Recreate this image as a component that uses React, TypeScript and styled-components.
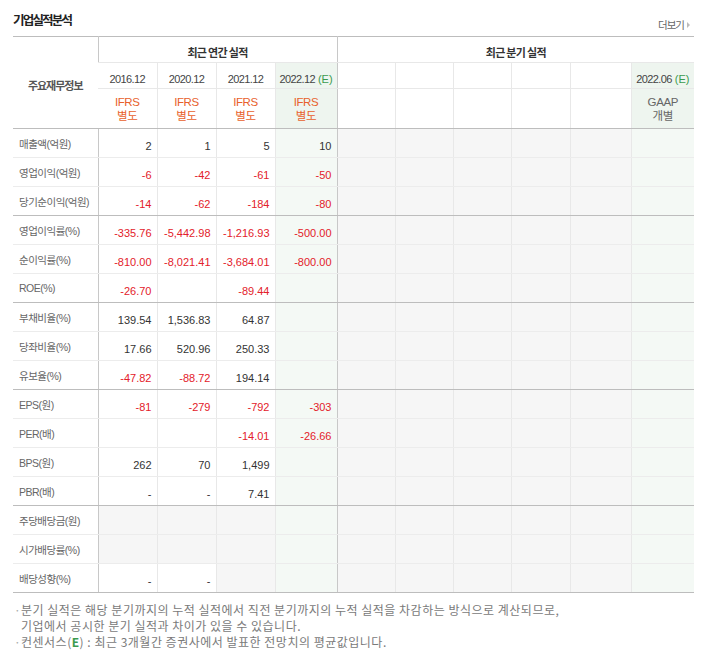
import React from 'react';
import styled, { createGlobalStyle } from 'styled-components';

const KR = `"Noto Sans CJK KR", sans-serif`;
const NUM = `"Liberation Sans", "Noto Sans CJK KR", sans-serif`;

const Global = createGlobalStyle`
  html, body { margin: 0; padding: 0; background: #fff; }
  body { font-family: ${KR}; color: #333; }
`;

const Wrap = styled.div`
  width: 681px;
  padding: 0 0 0 13px;
`;

const TitleBar = styled.div`
  height: 36px;
  display: flex;
  justify-content: space-between;
  align-items: flex-start;
`;

const Title = styled.h3`
  margin: 12px 0 0;
  font-size: 12.5px;
  line-height: 16px;
  font-weight: 700;
  letter-spacing: -1.8px;
  color: #222;
`;

const More = styled.a`
  margin: 18px 4px 0 0;
  font-size: 10.5px;
  line-height: 14px;
  letter-spacing: -1px;
  color: #666;
  display: flex;
  align-items: center;
  gap: 3px;
  text-decoration: none;
`;

const Arrow = styled.span`
  width: 0;
  height: 0;
  border-top: 3px solid transparent;
  border-bottom: 3px solid transparent;
  border-left: 3px solid #bbb;
`;

const Table = styled.table`
  width: 681px;
  border-collapse: collapse;
  table-layout: fixed;
  border-top: 1px solid #bdbdbd;
  border-bottom: 1px solid #bdbdbd;
`;

type CellProps = {
  $bg?: string;
  $left?: 'strong' | 'light' | 'none';
  $bottom?: 'strong' | 'light';
};

const leftColor = (l?: string) =>
  l === 'strong' ? '#c8c8c8' : l === 'none' ? 'transparent' : '#e8e8e8';

const Th = styled.th<CellProps & { $h: number }>`
  height: ${(p) => p.$h}px;
  padding: 0;
  background: ${(p) => p.$bg || '#fff'};
  border-left: 1px solid ${(p) => leftColor(p.$left)};
  border-bottom: 1px solid ${(p) => (p.$bottom === 'strong' ? '#bdbdbd' : '#e8e8e8')};
  font-weight: 400;
  text-align: center;
  vertical-align: middle;
  &:first-child { border-left: none; }
`;

const GroupHead = styled.span`
  font-family: ${KR};
  font-size: 11px;
  font-weight: 700;
  letter-spacing: -0.7px;
  color: #333;
`;

const LabelHead = styled.span`
  font-family: ${KR};
  font-size: 11px;
  font-weight: 700;
  letter-spacing: -1px;
  color: #555;
`;

const Period = styled.span`
  font-family: ${NUM};
  font-size: 11px;
  letter-spacing: -0.6px;
  color: #444;
`;

const Est = styled.span`
  color: #3b9a4e;
  margin-left: 3px;
  letter-spacing: 0;
`;

const Std = styled.span<{ $c: string }>`
  display: block;
  font-family: ${NUM};
  font-size: 11.5px;
  line-height: 14px;
  letter-spacing: -0.4px;
  color: ${(p) => p.$c};
`;

const Td = styled.td<CellProps>`
  height: 28px;
  padding: 0 5px 0 0;
  background: ${(p) => p.$bg || '#fff'};
  border-left: 1px solid ${(p) => leftColor(p.$left)};
  border-bottom: 1px solid ${(p) => (p.$bottom === 'strong' ? '#bdbdbd' : '#ececec')};
  text-align: right;
  vertical-align: middle;
  white-space: nowrap;
  overflow: hidden;
`;

const Label = styled.th<{ $bottom?: 'strong' | 'light' }>`
  height: 28px;
  padding: 0 0 0 6px;
  text-align: left;
  font-family: ${NUM};
  font-weight: 400;
  font-size: 10.5px;
  letter-spacing: -0.5px;
  color: #666;
  background: #fff;
  border-bottom: 1px solid ${(p) => (p.$bottom === 'strong' ? '#bdbdbd' : '#ececec')};
  white-space: nowrap;
`;

const Val = styled.span<{ $neg: boolean }>`
  font-family: ${NUM};
  font-size: 11px;
  color: ${(p) => (p.$neg ? '#e3212a' : '#333')};
`;

const Notes = styled.ul`
  list-style: none;
  margin: 9px 0 0;
  padding: 0;
  font-family: ${KR};
  font-size: 12px;
  line-height: 16px;
  color: #7a7a7a;
  letter-spacing: 0.5px;
`;

const Note = styled.li`
  position: relative;
  padding-left: 8px;
  &::before {
    content: '·';
    position: absolute;
    left: 1px;
    top: 0;
    color: #aaa;
  }
`;

const EstNote = styled.b`
  color: #3b9a4e;
  font-weight: 700;
`;

const GREEN = '#f4f9f5';
const GREEN_H = '#eef5ef';
const GRAY = '#f6f6f6';

const widths = [85, 59, 59, 59, 62, 58, 58, 58, 59, 61, 63];

type Row = [string, (string | null)[]];
const rows: Row[] = [
  ['매출액(억원)', ['2', '1', '5', '10']],
  ['영업이익(억원)', ['-6', '-42', '-61', '-50']],
  ['당기순이익(억원)', ['-14', '-62', '-184', '-80']],
  ['영업이익률(%)', ['-335.76', '-5,442.98', '-1,216.93', '-500.00']],
  ['순이익률(%)', ['-810.00', '-8,021.41', '-3,684.01', '-800.00']],
  ['ROE(%)', ['-26.70', '', '-89.44', '']],
  ['부채비율(%)', ['139.54', '1,536.83', '64.87', '']],
  ['당좌비율(%)', ['17.66', '520.96', '250.33', '']],
  ['유보율(%)', ['-47.82', '-88.72', '194.14', '']],
  ['EPS(원)', ['-81', '-279', '-792', '-303']],
  ['PER(배)', ['', '', '-14.01', '-26.66']],
  ['BPS(원)', ['262', '70', '1,499', '']],
  ['PBR(배)', ['-', '-', '7.41', '']],
  ['주당배당금(원)', [null, null, null, null]],
  ['시가배당률(%)', [null, null, null, null]],
  ['배당성향(%)', ['-', '-', null, null]],
];
const groupEnds = new Set([2, 5, 8, 12, 15]);

const years = ['2016.12', '2020.12', '2021.12'];

export default function App() {
  return (
    <>
      <Global />
      <Wrap>
        <TitleBar>
          <Title>기업실적분석</Title>
          <More href="#">
            더보기
            <Arrow />
          </More>
        </TitleBar>
        <Table>
          <colgroup>
            {widths.map((w, i) => (
              <col key={i} style={{ width: w }} />
            ))}
          </colgroup>
          <thead>
            <tr>
              <Th $h={25} rowSpan={3} $bottom="strong">
                <LabelHead>주요재무정보</LabelHead>
              </Th>
              <Th $h={25} colSpan={4} $left="strong">
                <GroupHead>최근 연간 실적</GroupHead>
              </Th>
              <Th $h={25} colSpan={6} $left="strong">
                <GroupHead>최근 분기 실적</GroupHead>
              </Th>
            </tr>
            <tr>
              {years.map((y, i) => (
                <Th key={y} $h={25} $left={i === 0 ? 'strong' : 'light'}>
                  <Period>{y}</Period>
                </Th>
              ))}
              <Th $h={25} $bg={GREEN_H}>
                <Period>
                  2022.12<Est>(E)</Est>
                </Period>
              </Th>
              {[0, 1, 2, 3, 4].map((i) => (
                <Th key={i} $h={25} $left={i === 0 ? 'strong' : 'light'} />
              ))}
              <Th $h={25} $bg={GREEN_H}>
                <Period>
                  2022.06<Est>(E)</Est>
                </Period>
              </Th>
            </tr>
            <tr>
              {[0, 1, 2].map((i) => (
                <Th key={i} $h={39} $left={i === 0 ? 'strong' : 'light'} $bottom="strong">
                  <Std $c="#e8612c">IFRS</Std>
                  <Std $c="#e8612c">별도</Std>
                </Th>
              ))}
              <Th $h={39} $bg={GREEN_H} $bottom="strong">
                <Std $c="#e8612c">IFRS</Std>
                <Std $c="#e8612c">별도</Std>
              </Th>
              {[0, 1, 2, 3, 4].map((i) => (
                <Th key={i} $h={39} $left={i === 0 ? 'strong' : 'light'} $bottom="strong" />
              ))}
              <Th $h={39} $bg={GREEN_H} $bottom="strong">
                <Std $c="#666">GAAP</Std>
                <Std $c="#666">개별</Std>
              </Th>
            </tr>
          </thead>
          <tbody>
            {rows.map(([label, vals], ri) => {
              const b = groupEnds.has(ri) ? 'strong' : 'light';
              return (
                <tr key={label}>
                  <Label $bottom={b}>{label}</Label>
                  {vals.map((v, ci) => {
                    const bg = ci === 3 ? GREEN : v === null ? GRAY : '#fff';
                    return (
                      <Td key={ci} $bg={bg} $bottom={b} $left={ci === 0 ? 'strong' : 'light'}>
                        {v ? <Val $neg={v.length > 1 && v[0] === '-'}>{v}</Val> : null}
                      </Td>
                    );
                  })}
                  {[0, 1, 2, 3, 4].map((i) => (
                    <Td key={'q' + i} $bg={GRAY} $bottom={b} $left={i === 0 ? 'strong' : 'light'} />
                  ))}
                  <Td $bg={GREEN} $bottom={b} />
                </tr>
              );
            })}
          </tbody>
        </Table>
        <Notes>
          <Note>
            분기 실적은 해당 분기까지의 누적 실적에서 직전 분기까지의 누적 실적을 차감하는 방식으로 계산되므로,
            <br />
            기업에서 공시한 분기 실적과 차이가 있을 수 있습니다.
          </Note>
          <Note>
            컨센서스(<EstNote>E</EstNote>) : 최근 3개월간 증권사에서 발표한 전망치의 평균값입니다.
          </Note>
        </Notes>
      </Wrap>
    </>
  );
}
